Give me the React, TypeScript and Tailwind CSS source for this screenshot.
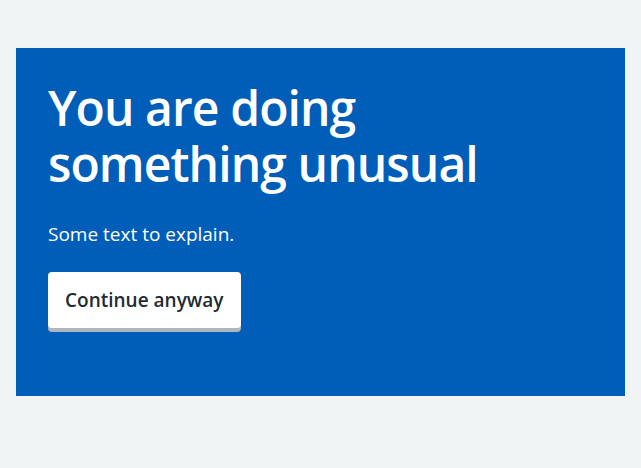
export default function App() {
  return (
    <div
      className="min-h-screen bg-[#f0f4f5] pt-12 px-4"
      style={{ fontFamily: '"Open Sans", Arial, sans-serif' }}
    >
      <div className="bg-[#005eb8] w-[609px] h-[348px] p-8 text-white">
        <h1 className="text-[48px] leading-[56px] font-semibold tracking-[-0.9px] max-w-[470px] mb-7">
          You are doing something unusual
        </h1>
        <p className="text-[19px] leading-[28px] mb-6">Some text to explain.</p>
        <button className="bg-white text-[#212b32] text-[19px] font-semibold h-14 px-[17px] rounded-[4px] shadow-[0_4px_0_#aeb7bd]">
          Continue anyway
        </button>
      </div>
    </div>
  );
}
